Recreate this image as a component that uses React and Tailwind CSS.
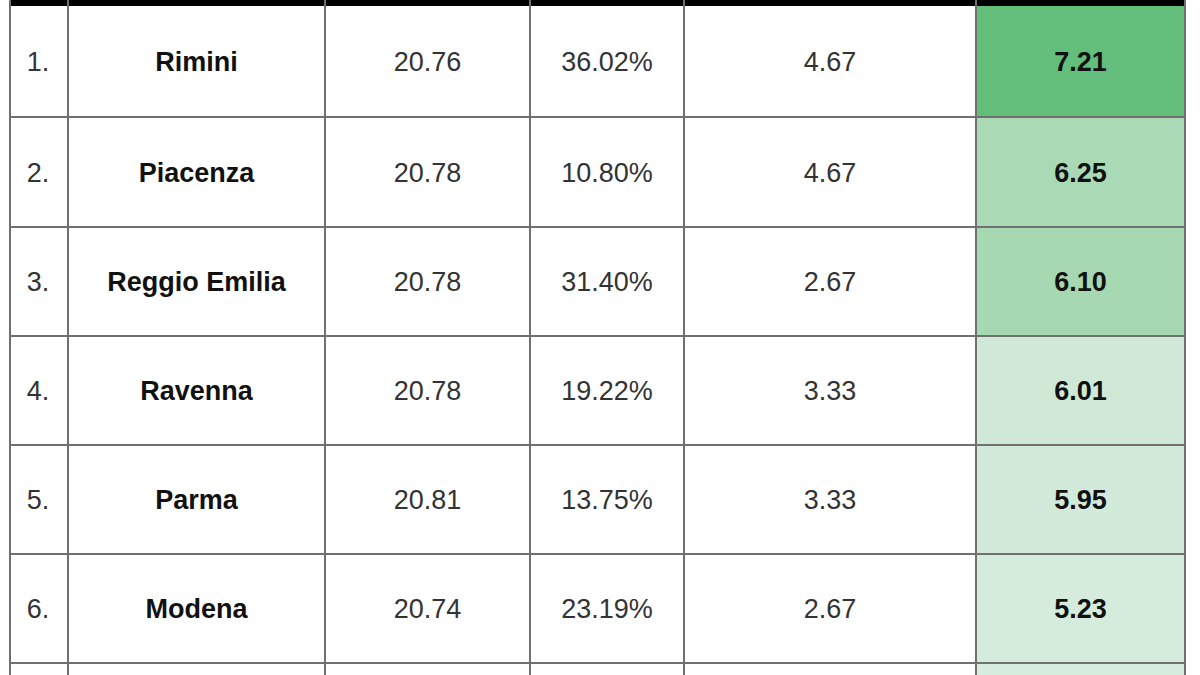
import React from "react";

const rows = [
  { n: "1.", name: "Rimini", a: "20.76", b: "36.02%", c: "4.67", s: "7.21", bg: "bg-[#63be7b]" },
  { n: "2.", name: "Piacenza", a: "20.78", b: "10.80%", c: "4.67", s: "6.25", bg: "bg-[#a9dab5]" },
  { n: "3.", name: "Reggio Emilia", a: "20.78", b: "31.40%", c: "2.67", s: "6.10", bg: "bg-[#a6d8b1]" },
  { n: "4.", name: "Ravenna", a: "20.78", b: "19.22%", c: "3.33", s: "6.01", bg: "bg-[#cfe9d6]" },
  { n: "5.", name: "Parma", a: "20.81", b: "13.75%", c: "3.33", s: "5.95", bg: "bg-[#d1eada]" },
  { n: "6.", name: "Modena", a: "20.74", b: "23.19%", c: "2.67", s: "5.23", bg: "bg-[#d5ecdc]" },
  { n: "", name: "", a: "", b: "", c: "", s: "", bg: "bg-[#d7eddd]" },
];

const heights = ["h-[110px]", "h-[110px]", "h-[109px]", "h-[109px]", "h-[109px]", "h-[109px]", "h-[109px]"];

const grid = "grid w-[1177px] grid-cols-[58px_257px_205px_154px_292px_211px]";
const cell = "flex items-center justify-center pt-[2px] border-l-2 border-[#707070]";

export default function App() {
  return (
    <div
      className="w-[1200px] h-[675px] overflow-hidden bg-white pl-[9px]"
      style={{ fontFamily: '"Liberation Sans", Arial, sans-serif' }}
    >
      <div className={`${grid} h-[6px]`}>
        {[0, 1, 2, 3, 4].map((i) => (
          <div key={i} className="bg-black border-l-2 border-[#707070]" />
        ))}
        <div className="bg-black border-l-2 border-r-2 border-[#707070]" />
      </div>
      {rows.map((r, i) => (
        <div
          key={i}
          className={`${grid} ${heights[i]} ${i > 0 ? "border-t-2 border-[#707070]" : ""} box-border text-[27px] leading-none`}
        >
          <div className={`${cell} pr-[2px] text-[#333]`}>{r.n}</div>
          <div className={`${cell} font-bold text-[#111]`}>{r.name}</div>
          <div className={`${cell} text-[#333]`}>{r.a}</div>
          <div className={`${cell} text-[#333]`}>{r.b}</div>
          <div className={`${cell} text-[#333]`}>{r.c}</div>
          <div className={`${cell} border-r-2 ${r.bg} font-bold text-[#111]`}>{r.s}</div>
        </div>
      ))}
    </div>
  );
}
